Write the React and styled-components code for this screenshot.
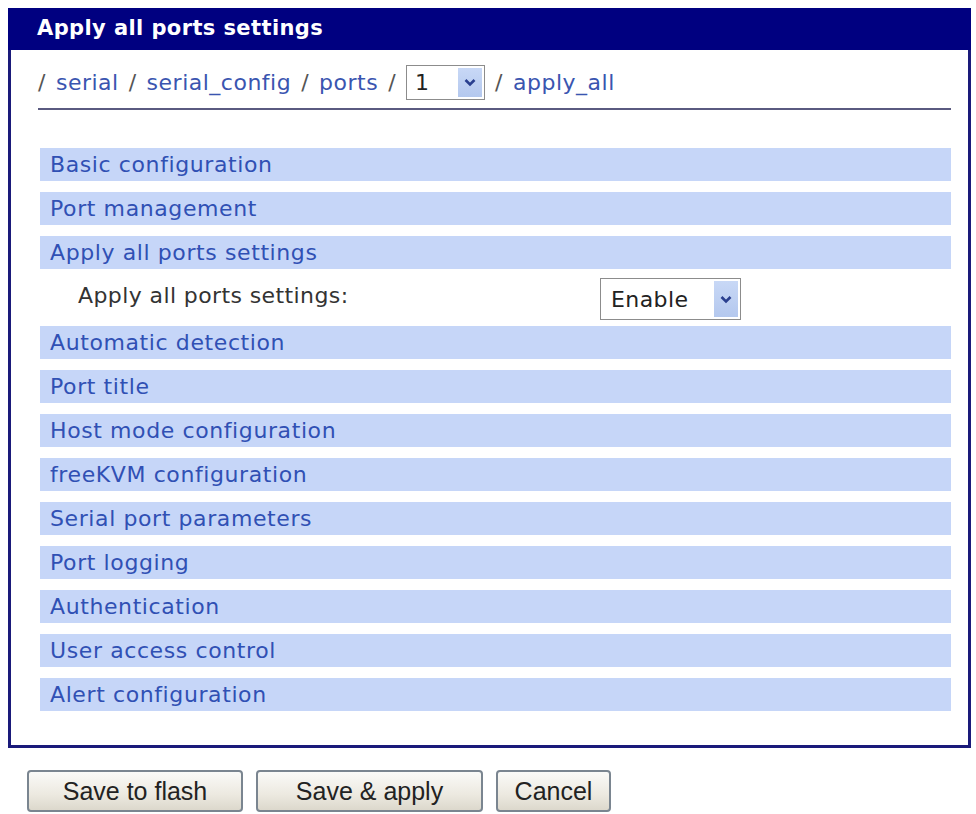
import React from "react";
import styled, { createGlobalStyle } from "styled-components";

const GlobalStyle = createGlobalStyle`
  html, body {
    margin: 0;
    padding: 0;
    background: #ffffff;
  }
  body {
    font-family: "DejaVu Sans", Verdana, sans-serif;
  }
`;

const Page = styled.div`
  width: 976px;
  height: 814px;
  padding: 8px 5px 0 8px;
  box-sizing: border-box;
  background: #fff;
`;

const Panel = styled.section`
  border: 3px solid #1a1a7a;
  border-top: none;
  height: 740px;
  box-sizing: border-box;
  display: flex;
  flex-direction: column;
`;

const Header = styled.h1`
  margin: 0 -3px;
  height: 42px;
  background: #000080;
  color: #fff;
  font-size: 21px;
  letter-spacing: 0.4px;
  font-weight: bold;
  display: flex;
  align-items: center;
  padding: 0 0 2px 29px;
  box-sizing: border-box;
`;

const Body = styled.div`
  padding: 14px 17px 0 29px;
  display: flex;
  flex-direction: column;
`;

const Crumbs = styled.div`
  display: flex;
  align-items: center;
  gap: 10px;
  font-size: 22px;
  letter-spacing: 0.5px;
  color: #555;
  height: 36px;
  padding-bottom: 8px;
  border-bottom: 2px solid #5a5a80;
  margin-left: -2px;
`;

const Crumb = styled.span`
  color: #3a55b0;
`;

const Select = styled.div`
  display: flex;
  align-items: stretch;
  width: ${(p) => p.width}px;
  height: ${(p) => p.height}px;
  border: 1px solid #8c8c8c;
  box-sizing: border-box;
  background: #fff;
  font-size: 22px;
  letter-spacing: 0.4px;
  color: #222;
`;

const SelectValue = styled.span`
  flex: 1;
  display: flex;
  align-items: center;
  padding-left: ${(p) => p.pad}px;
`;

const SelectArrow = styled.span`
  width: 24px;
  margin: 2px;
  background: linear-gradient(#c8d8f6, #b4c8ee);
  display: flex;
  align-items: center;
  justify-content: center;
`;

const List = styled.div`
  display: flex;
  flex-direction: column;
  gap: 11px;
  margin-top: 38px;
`;

const Bar = styled.div`
  height: 33px;
  background: #c6d6f8;
  color: #3050b4;
  font-size: 22px;
  letter-spacing: 0.6px;
  display: flex;
  align-items: center;
  padding-left: 10px;
`;

const SettingRow = styled.div`
  display: flex;
  align-items: center;
  height: 44px;
  margin: -3px 0 -6px;
`;

const SettingLabel = styled.span`
  width: 522px;
  padding-left: 38px;
  font-size: 22px;
  letter-spacing: 0.4px;
  color: #333;
  margin-top: -8px;
`;

const Buttons = styled.div`
  display: flex;
  gap: 13px;
  padding: 22px 0 0 19px;
`;

const Button = styled.button`
  height: 42px;
  width: ${(p) => p.width}px;
  border: 2px solid #7a8590;
  border-radius: 4px;
  background: linear-gradient(#fafaf8, #ece9e0 60%, #dcd8cc);
  font-family: "Liberation Sans", Arial, sans-serif;
  font-size: 25px;
  color: #222;
  padding: 0;
  cursor: pointer;
`;

const Chevron = () => (
  <svg width="12" height="9" viewBox="0 0 12 9">
    <path d="M1.5 2 L6 6.5 L10.5 2" stroke="#2a3f8f" strokeWidth="2.6" fill="none" />
  </svg>
);

const sectionsTop = ["Basic configuration", "Port management", "Apply all ports settings"];
const sectionsBottom = [
  "Automatic detection",
  "Port title",
  "Host mode configuration",
  "freeKVM configuration",
  "Serial port parameters",
  "Port logging",
  "Authentication",
  "User access control",
  "Alert configuration",
];

export default function App() {
  return (
    <Page>
      <GlobalStyle />
      <Panel>
        <Header>Apply all ports settings</Header>
        <Body>
          <Crumbs>
            <span>/</span>
            <Crumb>serial</Crumb>
            <span>/</span>
            <Crumb>serial_config</Crumb>
            <span>/</span>
            <Crumb>ports</Crumb>
            <span>/</span>
            <Select width={79} height={35}>
              <SelectValue pad={8}>1</SelectValue>
              <SelectArrow>
                <Chevron />
              </SelectArrow>
            </Select>
            <span>/</span>
            <Crumb>apply_all</Crumb>
          </Crumbs>
          <List>
            {sectionsTop.map((s) => (
              <Bar key={s}>{s}</Bar>
            ))}
            <SettingRow>
              <SettingLabel>Apply all ports settings:</SettingLabel>
              <Select width={141} height={42}>
                <SelectValue pad={10}>Enable</SelectValue>
                <SelectArrow>
                  <Chevron />
                </SelectArrow>
              </Select>
            </SettingRow>
            {sectionsBottom.map((s) => (
              <Bar key={s}>{s}</Bar>
            ))}
          </List>
        </Body>
      </Panel>
      <Buttons>
        <Button width={216}>Save to flash</Button>
        <Button width={227}>Save &amp; apply</Button>
        <Button width={115}>Cancel</Button>
      </Buttons>
    </Page>
  );
}
